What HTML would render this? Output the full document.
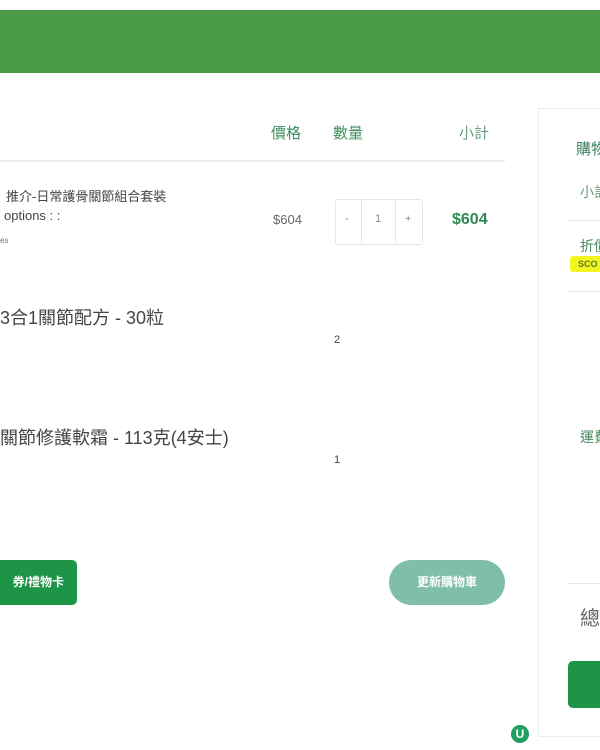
<!DOCTYPE html>
<html><head><meta charset="utf-8"><style>
body{margin:0;width:600px;height:750px;background:#fff;position:relative;overflow:hidden;font-family:"Liberation Sans","Noto Sans CJK TC",sans-serif;}
.a{position:absolute;white-space:nowrap}
.g{color:#2e8b57}
</style></head><body>
<div class="a" style="left:0;top:10px;width:600px;height:63px;background:#4a9a48"></div>
<div class="a g" style="left:271px;top:122px;font-size:15px;color:#3f8f60">價格</div>
<div class="a g" style="left:333px;top:122px;font-size:15px;color:#3f8f60">數量</div>
<div class="a" style="left:459px;top:122px;font-size:15px;color:#6a9a80">小計</div>
<div class="a" style="left:0;top:160px;width:505px;height:2px;background:#eee"></div>
<div class="a" style="left:6px;top:186px;font-size:13px;color:#444">推介-日常護骨關節組合套裝</div>
<div class="a" style="left:4px;top:208px;font-size:13px;color:#444">options : :</div>
<div class="a" style="left:0;top:236px;font-size:8px;color:#777">es</div>
<div class="a" style="left:273px;top:212px;font-size:13px;color:#666">$604</div>
<div class="a" style="left:335px;top:199px;width:86px;height:44px;border:1px solid #e6e6e6;border-radius:3px"></div>
<div class="a" style="left:361px;top:199px;width:1px;height:44px;background:#e6e6e6"></div>
<div class="a" style="left:395px;top:199px;width:1px;height:44px;background:#e6e6e6"></div>
<div class="a" style="left:345px;top:213px;font-size:11px;color:#888">-</div>
<div class="a" style="left:375px;top:213px;font-size:11px;color:#888">1</div>
<div class="a" style="left:405px;top:213px;font-size:11px;color:#888">+</div>
<div class="a" style="left:452px;top:211px;font-size:16px;font-weight:bold;color:#2f8a50">$604</div>
<div class="a" style="left:0;top:304px;font-size:18px;color:#444">3合1關節配方 - 30粒</div>
<div class="a" style="left:334px;top:334px;font-size:11px;color:#444">2</div>
<div class="a" style="left:0;top:424px;font-size:18px;color:#444">關節修護軟霜 - 113克(4安士)</div>
<div class="a" style="left:334px;top:454px;font-size:11px;color:#444">1</div>
<div class="a" style="left:0;top:560px;width:77px;height:45px;background:#1e9446;border-radius:0 5px 5px 0;color:#fff;font-size:12px;font-weight:bold;line-height:45px;text-align:right;padding-right:0"><span style="margin-right:13px">券/禮物卡</span></div>
<div class="a" style="left:389px;top:560px;width:116px;height:45px;background:#7fbfaa;border-radius:23px;color:#fff;font-size:12px;font-weight:bold;line-height:45px;text-align:center">更新購物車</div>
<div class="a" style="left:538px;top:108px;width:70px;height:627px;border:1px solid #ececec"></div>
<div class="a" style="left:576px;top:138px;font-size:15px;color:#3f7f60">購物</div>
<div class="a" style="left:580px;top:182px;font-size:14px;color:#6a9a80">小計</div>
<div class="a" style="left:568px;top:220px;width:40px;height:1px;background:#e6e6e6"></div>
<div class="a" style="left:580px;top:236px;font-size:14px;color:#4a8a60">折價</div>
<div class="a" style="left:570px;top:256px;width:34px;height:16px;background:#f3f520;border-radius:3px"></div>
<div class="a" style="left:578px;top:259px;font-size:9px;font-weight:bold;color:#5a7a30">SCO</div>
<div class="a" style="left:568px;top:291px;width:40px;height:1px;background:#e6e6e6"></div>
<div class="a" style="left:580px;top:427px;font-size:14px;color:#4a8a60">運費</div>
<div class="a" style="left:568px;top:583px;width:40px;height:1px;background:#e6e6e6"></div>
<div class="a" style="left:580px;top:602px;font-size:20px;color:#666">總</div>
<div class="a" style="left:568px;top:661px;width:40px;height:47px;background:#1e9446;border-radius:5px"></div>
<div class="a" style="left:511px;top:725px;width:18px;height:18px;background:#1ea060;border-radius:50% 50% 50% 50%;color:#fff;font-size:12px;font-weight:bold;text-align:center;line-height:18px">U</div>
</body></html>
